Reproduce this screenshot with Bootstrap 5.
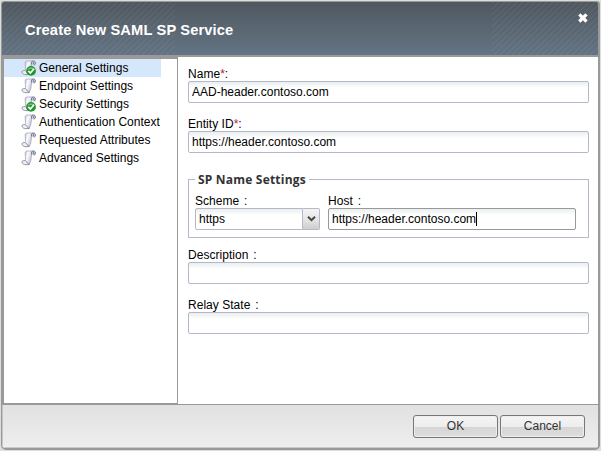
<!DOCTYPE html>
<html lang="en">
<head>
<meta charset="utf-8">
<title>Create New SAML SP Service</title>
<link href="https://cdn.jsdelivr.net/npm/bootstrap@5.3.0/dist/css/bootstrap.min.css" rel="stylesheet">
<style>
html,body{height:451px;overflow:hidden}
body{background:#dcdedc;font:12px/18px "Liberation Sans",Arial,sans-serif;color:#000;padding:1px 0 0 1px}
.dialog{width:599px;height:449px;border:1px solid #999;border-width:1px 2px 2px 1px;border-radius:3px 3px 5px 5px;background:#fff;overflow:hidden}
.titlebar{--stripes:repeating-linear-gradient(135deg,rgba(255,255,255,.08) 0 1px,transparent 1px 4.243px);height:55px;flex:none;border-bottom:2px solid #999;padding:0 9px 0 23px;color:#fff;background:var(--stripes) left/173px 100% no-repeat,var(--stripes) right/106px 100% no-repeat,linear-gradient(#50575f,#596570 45%,#647484)}
.titlebar h1{font:bold 14.667px/18px "Liberation Sans",Arial,sans-serif;margin:19px 0 0;letter-spacing:.14px}
.close-x{background:none;border:0;padding:0;width:12px;height:12px;margin-top:10px;line-height:0}
.main-area{height:348px;flex:none;border-bottom:1px solid #999}
.side{width:176px;flex:none;border:solid #999;border-width:2px 1px 1px 2px}
.side .nav-link{width:157px;height:18px;padding:0 0 0 17px;color:#000;line-height:18px;white-space:nowrap}
.side .nav-link.active{background:#d5e7fb}
.side svg{width:16px;height:16px;margin-right:2px;flex:none}
.fields{padding:8px 10px 0}
.field{height:50px}
.field label,.pair label{display:block;height:16px;line-height:18px;white-space:pre;letter-spacing:.03px}
.gap-colon{margin-left:1.5px}
.req{color:#b52033}
.box{display:block;width:100%;height:22px;padding:0 3px;border:1px solid #b5b8c8;border-radius:2px;background:linear-gradient(#e9eeee,#fff 6px);font-size:12px;line-height:20px;color:#000}
.group{position:relative;height:59px;margin:14px 0 8px;border:1px solid #b5b8c8;padding:12px 12px 0 6px}
.group legend{position:absolute;left:6px;top:-9px;width:auto;margin:0;padding:0 3px;background:#fff;font:bold 12px/18px "Open Sans","Noto Sans",sans-serif;letter-spacing:.2px;color:#333;white-space:nowrap}
.scheme{width:125px;margin-right:8px}
.scheme .box{width:108px;border-radius:2px 0 0 2px}
.trigger{width:17px;height:22px;padding:0;border:1px solid #b5b8c8;border-left:0;border-radius:0 2px 2px 0;background:linear-gradient(#f4f4f4,#e6e6e6 50%,#cecece);line-height:0}
.host{width:248px}
.host .box{border-color:#999}
.caret{display:inline-block;width:1px;height:14px;background:#000;vertical-align:-3px}
.foot{flex:1;background:linear-gradient(#e1e1e1,#eee);padding:10px 13px 0 0;gap:2px;border-left:1px solid #c5c5c5;border-bottom:1px solid #c9c9c9}
.foot .btn{width:85px;height:23px;padding:0;border:1px solid #777;border-radius:3px;font-size:12px;line-height:21px;color:#333;background:linear-gradient(#f5f5f5,#ededed 50%,#d5d5d5 51%,#dedede);box-shadow:inset 0 0 0 1px #eee}
</style>
</head>
<body>
<svg width="0" height="0" class="position-absolute">
<defs>
<linearGradient id="pg" x1="0" x2="1" y1="0" y2=".4"><stop stop-color="#a9abc4"/><stop offset=".45" stop-color="#fdfdff"/><stop offset="1" stop-color="#b3b6cc"/></linearGradient>
<symbol id="scroll" viewBox="0 0 16 16">
<path d="M4.2 3.4C4 1.8 5 1 6.3 1h6L10.8 3.6 9.6 11.5 8.4 14H5.2L3 11.2 4.6 9.6z" fill="url(#pg)" stroke="#9c9eb3" stroke-width=".7"/>
<path d="M1.2 11.2c1.5-1 3.6-.7 4.4.4.8 1.2.6 2.4 2.8 2.7-2 .6-4.8.5-6.2-.4-1-.7-1.6-1.9-1-2.7z" fill="#f1f2f8" stroke="#787b93" stroke-width=".8"/>
<path d="M10.8 4.5C10.3 2.2 11 1 12.4 1c1.5 0 2.2 1.2 2 2.5-.2 1.1-1 1.6-1.9 1.4" fill="#dfe1ef" stroke="#65687f" stroke-width="1"/>
<circle cx="12.7" cy="3.1" r=".8" fill="#62657d"/>
</symbol>
<symbol id="done" viewBox="0 0 16 16"><use href="#scroll"/>
<circle cx="10" cy="10.9" r="4.9" fill="#22962e"/><path d="M6.2 9.7a4.1 4.1 0 0 1 7.6 0c-1.8-1-5.6-1-7.6 0z" fill="#70c66e"/>
<path d="M7.3 10.9l2.1 2.1 3.6-4.2" fill="none" stroke="#fff" stroke-width="1.7"/></symbol>
</defs></svg>
<div class="dialog d-flex flex-column">
<header class="titlebar d-flex justify-content-between align-items-start">
<h1>Create New SAML SP Service</h1>
<button class="close-x" aria-label="Close"><svg width="12" height="12" viewBox="0 0 12 12"><path d="M2.3 2.3l7.2 7.2M9.5 2.3L2.3 9.5" stroke="#fff" stroke-width="3.2"/></svg></button>
</header>
<div class="main-area d-flex">
<nav class="side nav flex-column flex-nowrap">
<a class="nav-link active d-flex align-items-center"><svg><use href="#done"/></svg>General Settings</a>
<a class="nav-link d-flex align-items-center"><svg><use href="#scroll"/></svg>Endpoint Settings</a>
<a class="nav-link d-flex align-items-center"><svg><use href="#done"/></svg>Security Settings</a>
<a class="nav-link d-flex align-items-center"><svg><use href="#scroll"/></svg>Authentication Context</a>
<a class="nav-link d-flex align-items-center"><svg><use href="#scroll"/></svg>Requested Attributes</a>
<a class="nav-link d-flex align-items-center"><svg><use href="#scroll"/></svg>Advanced Settings</a>
</nav>
<main class="fields flex-grow-1">
<div class="field"><label>Name<span class="req">*</span>:</label><div class="box">AAD-header.contoso.com</div></div>
<div class="field"><label>Entity ID<span class="req">*</span>:</label><div class="box">https://header.contoso.com</div></div>
<fieldset class="group"><legend>SP Name Settings</legend>
<div class="pair d-flex">
<div class="scheme"><label>Scheme <span class="gap-colon">:</span></label><div class="d-flex"><div class="box">https</div><button class="trigger" aria-label="Open list"><svg width="11" height="8" viewBox="0 0 11 8"><path d="M2 1.8l3.5 3.4L9 1.8" fill="none" stroke="#444" stroke-width="2"/></svg></button></div></div>
<div class="host"><label>Host <span class="gap-colon">:</span></label><div class="box">https://header.contoso.com<span class="caret"></span></div></div>
</div>
</fieldset>
<div class="field"><label>Description <span class="gap-colon">:</span></label><div class="box"></div></div>
<div class="field"><label>Relay State <span class="gap-colon">:</span></label><div class="box"></div></div>
</main>
</div>
<footer class="foot d-flex justify-content-end">
<button class="btn">OK</button><button class="btn">Cancel</button>
</footer>
</div>
<script src="https://cdn.jsdelivr.net/npm/bootstrap@5.3.0/dist/js/bootstrap.bundle.min.js"></script>
</body>
</html>
